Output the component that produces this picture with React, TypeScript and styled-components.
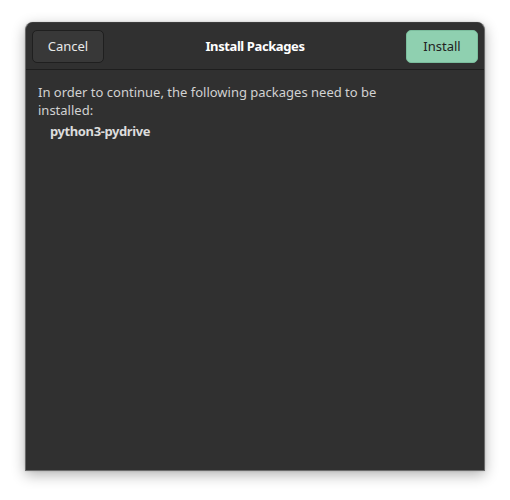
import * as React from "react";
import styled, { createGlobalStyle } from "styled-components";

const GlobalStyle = createGlobalStyle`
  html, body {
    margin: 0;
    padding: 0;
    background: #ffffff;
  }
  body {
    font-family: "Noto Sans", "Open Sans", sans-serif;
  }
`;

const Stage = styled.div`
  width: 510px;
  height: 500px;
  padding: 22px 0 0 25px;
  box-sizing: border-box;
`;

const Dialog = styled.div`
  width: 460px;
  height: 449px;
  box-sizing: border-box;
  display: flex;
  flex-direction: column;
  background: #303030;
  border: 1px solid #6a6a6a;
  border-top-color: #3c3c3c;
  border-radius: 8px 8px 0 0;
  box-shadow: 0 4px 14px rgba(0, 0, 0, 0.3), 0 0 2px rgba(0, 0, 0, 0.2);
  overflow: hidden;
`;

const HeaderBar = styled.div`
  height: 46px;
  flex-shrink: 0;
  display: grid;
  grid-template-columns: 1fr auto 1fr;
  align-items: center;
  padding: 0 6px;
  border-bottom: 1px solid #1e1e1e;
  background: #303030;
`;

const Title = styled.h1`
  margin: 0;
  font-size: 13px;
  font-weight: 700;
  letter-spacing: -0.4px;
  color: #ffffff;
`;

const Button = styled.button<{ $suggested?: boolean }>`
  height: 33px;
  width: 72px;
  box-sizing: border-box;
  border-radius: 5px;
  font-family: inherit;
  font-size: 13px;
  padding: 0;
  border: 1px solid ${(p) => (p.$suggested ? "#7bbd9d" : "#1f1f1f")};
  background: ${(p) => (p.$suggested ? "#8fd0b0" : "#383838")};
  color: ${(p) => (p.$suggested ? "#222222" : "#e8e8e8")};
  justify-self: ${(p) => (p.$suggested ? "end" : "start")};
`;

const Body = styled.div`
  flex: 1;
  padding: 13px 12px;
  display: flex;
  flex-direction: column;
  gap: 2px;
`;

const Message = styled.p`
  margin: 0;
  font-size: 13px;
  line-height: 18px;
  color: #d2d2d2;
`;

const Line = styled.span`
  display: block;
`;

const PackageName = styled.div`
  padding-left: 12px;
  font-size: 13px;
  line-height: 20px;
  font-weight: 700;
  letter-spacing: -0.4px;
  color: #dcdcdc;
`;

export default function App() {
  return (
    <>
      <GlobalStyle />
      <Stage>
        <Dialog>
          <HeaderBar>
            <Button>Cancel</Button>
            <Title>Install Packages</Title>
            <Button $suggested>Install</Button>
          </HeaderBar>
          <Body>
            <Message>
              <Line>In order to continue, the following packages need to be</Line>
              <Line>installed:</Line>
            </Message>
            <PackageName>python3-pydrive</PackageName>
          </Body>
        </Dialog>
      </Stage>
    </>
  );
}
